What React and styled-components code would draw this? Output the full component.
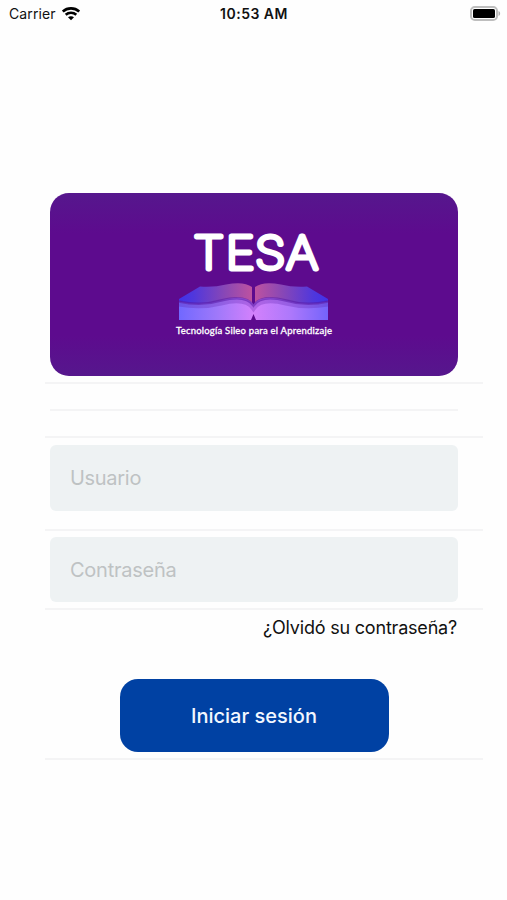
import { useState } from 'react';
import styled, { createGlobalStyle } from 'styled-components';

const App = () => {
  const [user, setUser] = useState('');
  const [password, setPassword] = useState('');

  return (
    <Screen>
      <GlobalStyle />
      <StatusBar>
        <Carrier>
          Carrier
          <WifiIcon />
        </Carrier>
        <Clock>10:53 AM</Clock>
        <BatteryIcon />
      </StatusBar>
      <Form onSubmit={e => e.preventDefault()}>
        <Row height={191}>
          <Banner>
            <Logo />
          </Banner>
        </Row>
        <Row height={54}>
          <Divider />
        </Row>
        <Row height={93}>
          <Field
            height={66}
            spacing="-0.3px"
            placeholder="Usuario"
            value={user}
            onChange={e => setUser(e.target.value)}
          />
        </Row>
        <Row height={79} top={6}>
          <Field
            height={65}
            spacing="-0.25px"
            type="password"
            placeholder="Contraseña"
            value={password}
            onChange={e => setPassword(e.target.value)}
          />
        </Row>
        <Row height={150}>
          <Forgot>¿Olvidó su contraseña?</Forgot>
          <Submit type="submit">Iniciar sesión</Submit>
        </Row>
      </Form>
    </Screen>
  );
};

const WifiIcon = () => (
  <svg width="18" height="14" viewBox="0 0 18 14" fill="none" stroke="#000" strokeWidth="2.6">
    <path d="M.8 4.600C5.300.3 12.700.3 17.200 4.600" />
    <path d="M3.700 7.700c3-2.700 7.600-2.700 10.600 0" />
    <path d="M9 13.200 6 10.300c1.600-1.500 4.400-1.500 6 0z" fill="#000" stroke="none" />
  </svg>
);

const BatteryIcon = () => (
  <svg width="31" height="15" viewBox="0 0 31 15">
    <rect x="1" y="1" width="26" height="13" rx="3.8" fill="#fff" stroke="#bebebe" strokeWidth="2" />
    <rect x="3" y="3" width="22" height="9" rx="1.6" fill="#000" />
    <path d="M28.5 5v5c2.2-.8 2.2-4.2 0-5z" fill="#b0b0b0" />
  </svg>
);

const Logo = () => (
  <LogoSvg width="160" height="130" viewBox="0 -15 160 130">
    <defs>
      <linearGradient id="leftPage">
        <stop offset="0" stopColor="#4031ea" />
        <stop offset=".2" stopColor="#5037dc" />
        <stop offset=".65" stopColor="#8c48b4" />
        <stop offset="1" stopColor="#bd52a0" />
      </linearGradient>
      <linearGradient id="rightPage">
        <stop offset="0" stopColor="#bd52a0" />
        <stop offset=".35" stopColor="#8c48b4" />
        <stop offset=".8" stopColor="#5037dc" />
        <stop offset="1" stopColor="#4031ea" />
      </linearGradient>
      <linearGradient id="pageEdge">
        <stop offset="0" stopColor="#7168ff" />
        <stop offset=".25" stopColor="#9e78fa" />
        <stop offset=".5" stopColor="#d381fc" />
        <stop offset=".75" stopColor="#ad78fb" />
        <stop offset="1" stopColor="#7464fb" />
      </linearGradient>
    </defs>
    <Title transform="scale(1.1 1)" x="17.8 47 73.7 102" y="41.2">
      TESA
    </Title>
    <path d="M5 71 26 58.500q14 1 26-2 18-3.500 26 2.500v16q-10-7-27-2-25 7-46 0z" fill="url(#leftPage)" />
    <path d="M154 71 133 58.500q-14 1-26-2-18-3.500-26 2.500v16q10-7 27-2 25 7 46 0z" fill="url(#rightPage)" />
    <path
      d="M5 73.500q22 5 42-1 25-7 32.500 4 7.500-11 32.500-4 20 6 42 1v18.500H82l-2.500-6-2.500 6H5z"
      fill="url(#pageEdge)"
    />
    <PageShadow width="5" opacity=".28" d="M5 76q22 4 42-1 25-6 32.500 5 7.500-11 32.500-5 20 5 42 1" />
    <PageShadow width="2.5" opacity=".55" d="M5 73.500q22 5 42-1 25-6.500 32.500 5 7.500-11.500 32.500-5 20 6 42 1" />
    <Tagline x="2" y="106" textLength="156">
      Tecnología Sileo para el Aprendizaje
    </Tagline>
  </LogoSvg>
);

const GlobalStyle = createGlobalStyle`
  * {
    box-sizing: border-box;
  }

  body {
    margin: 0;
    background: #fefefe;
    font-family: Inter, 'Liberation Sans', sans-serif;
  }
`;

const Screen = styled.main`
  min-height: 900px;
  color: #111;
`;

const StatusBar = styled.header`
  display: grid;
  grid-template-columns: 1fr auto 1fr;
  align-items: center;
  height: 27px;
  padding: 0 6px 0 9px;

  > :last-child {
    justify-self: end;
  }
`;

const Carrier = styled.div`
  display: flex;
  align-items: center;
  gap: 6px;
  font-size: 14px;
  letter-spacing: 0.1px;
`;

const Clock = styled.time`
  margin-right: 2px;
  font-size: 14px;
  font-weight: 600;
  letter-spacing: 0.5px;
`;

const Form = styled.form`
  width: 438px;
  margin: 166px 0 0 45px;
`;

const Row = styled.section`
  display: flex;
  flex-direction: column;
  height: ${props => props.height}px;
  padding: ${props => props.top || 7}px 25px 0 5px;
  border-bottom: 2px solid #f4f4f5;

  &:first-child {
    padding-top: 0;
  }
`;

const Banner = styled.div`
  display: flex;
  justify-content: center;
  height: 183px;
  padding-top: 20px;
  border-radius: 19px;
  background: linear-gradient(#56178d, #5d0b8e 22%, #5d0b8e 78%, #56178d);
`;

const LogoSvg = styled.svg`
  overflow: visible;
`;

const Title = styled.text`
  font-family: Inter, sans-serif;
  font-size: 45px;
  font-weight: 100;
  fill: #fff;
  stroke: #fff;
  stroke-width: 4.8px;
  stroke-linejoin: round;
`;

const PageShadow = styled.path`
  fill: none;
  stroke: #5a1ba8;
  stroke-width: ${props => props.width}px;
`;

const Tagline = styled.text`
  font-family: Lato, sans-serif;
  font-size: 9.5px;
  fill: #fff;
  stroke: #fff;
  stroke-width: 0.3px;
`;

const Divider = styled.hr`
  width: 100%;
  height: 2px;
  margin: 18px 0 0;
  border: 0;
  background: #f4f4f5;
`;

const Field = styled.input`
  width: 100%;
  height: ${props => props.height}px;
  flex-shrink: 0;
  padding: 0 20px;
  border: 0;
  border-radius: 6px;
  outline: 0;
  background: #eef2f3;
  font-family: inherit;
  font-size: 20px;
  letter-spacing: ${props => props.spacing};

  &::placeholder {
    color: #bec2c3;
    opacity: 1;
  }
`;

const Forgot = styled.a`
  align-self: flex-end;
  margin-right: 1px;
  font-size: 18px;
  line-height: 22px;
  letter-spacing: -0.2px;
`;

const Submit = styled.button`
  align-self: center;
  width: 269px;
  height: 73px;
  margin-top: 40px;
  border: 0;
  border-radius: 18px;
  background: #0041a3;
  color: #f2f7ff;
  font-family: inherit;
  font-size: 20px;
  font-weight: 500;
`;

export default App;
